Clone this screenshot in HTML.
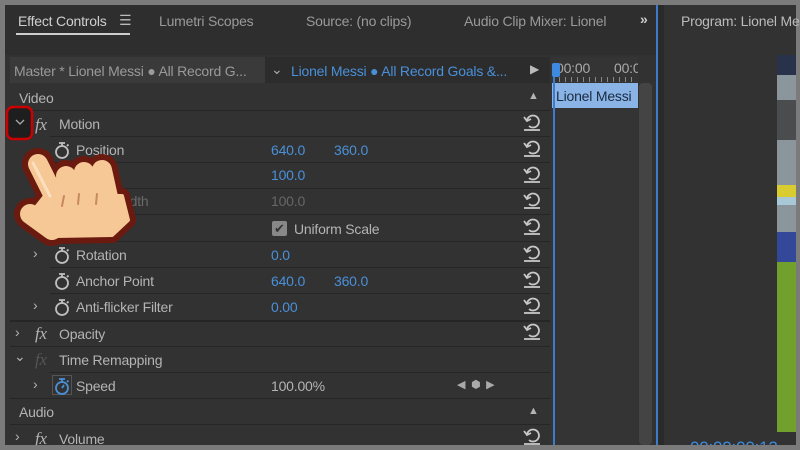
<!DOCTYPE html>
<html><head><meta charset="utf-8"><style>
*{margin:0;padding:0;box-sizing:border-box}
html,body{width:800px;height:450px;overflow:hidden}
body{background:#7b7b7b;position:relative;font-family:"Liberation Sans","DejaVu Sans",sans-serif;font-size:14px;color:#b4b4b4}
.a{position:absolute}
.row{position:absolute;left:10px;width:540px;height:26px;border-top:1px solid #262626}
.t{position:absolute;white-space:nowrap;font-size:14px;letter-spacing:-0.2px}
.blue{color:#4a90d9}
</style></head><body>
<div class="a" style="left:5px;top:5px;width:791px;height:440px;background:#323232"></div>
<div class="a" style="left:5px;top:5px;width:651px;height:50px;background:#2e2e2e"></div>
<div class="t" style="left:18px;top:13px;color:#cfcfcf">Effect Controls</div>
<div class="t" style="left:119px;top:12px;color:#bbb">☰</div>
<div class="a" style="left:16px;top:33px;width:114px;height:2px;background:#ccc"></div>
<div class="t" style="left:159px;top:13px;color:#9a9a9a">Lumetri Scopes</div>
<div class="t" style="left:306px;top:13px;color:#9a9a9a">Source: (no clips)</div>
<div class="t" style="left:464px;top:13px;color:#9a9a9a;width:146px;overflow:hidden">Audio Clip Mixer: Lionel</div>
<div class="t" style="left:640px;top:11px;color:#ccc;font-weight:bold">»</div>
<div class="a" style="left:656px;top:5px;width:2px;height:440px;background:#3d7ccc"></div>
<div class="a" style="left:658px;top:5px;width:6px;height:440px;background:#2a2a2a"></div>
<div class="t" style="left:681px;top:13px;color:#bbb">Program: Lionel Messi</div>
<div class="a" style="left:10px;top:57px;width:255px;height:26px;background:#3a3a3a"></div>
<div class="t" style="left:14px;top:63px;color:#9a9a9a">Master * Lionel Messi ● All Record G...</div>
<div class="a" style="left:265px;top:57px;width:285px;height:26px;background:#2c2c2c"></div>
<div class="t" style="left:271px;top:61px;color:#aaa">⌄</div>
<div class="t blue" style="left:291px;top:63px">Lionel Messi ● All Record Goals &amp;...</div>
<div class="t" style="left:530px;top:62px;color:#bbb;font-size:12px">▶</div>
<div class="a" style="left:550px;top:57px;width:88px;height:388px;background:#343434"></div>
<div class="t" style="left:556px;top:60px;color:#aaa">00:00</div>
<div class="t" style="left:614px;top:60px;color:#aaa;width:24px;overflow:hidden">00:00</div>
<div class="a" style="left:552px;top:63px;width:8px;height:14px;background:#3d8ae0;border-radius:2px"></div>
<div class="a" style="left:553px;top:77px;width:83px;height:5px;background:repeating-linear-gradient(90deg,#888 0 1px,transparent 1px 6px)"></div>
<div class="a" style="left:552px;top:83px;width:86px;height:25px;background:#8ab4e6"></div>
<div class="t" style="left:556px;top:88px;color:#1a2a40">Lionel Messi</div>
<div class="a" style="left:553px;top:77px;width:2px;height:368px;background:#3d7ccc"></div>
<div class="a" style="left:639px;top:83px;width:13px;height:362px;background:#444;border-radius:4px"></div>
<div class="row" style="top:84px;border-top:none"></div>
<div class="t" style="left:19px;top:90px">Video</div>
<div class="t" style="left:528px;top:90px;font-size:11px">▲</div>
<div class="row" style="top:110px"></div>
<div class="t" style="left:35px;top:115px;font-style:italic;font-family:'Liberation Serif',serif;font-size:17px">fx</div>
<div class="t" style="left:59px;top:116px">Motion</div>
<div class="row" style="left:50px;width:500px;top:136px"></div>
<div class="t" style="left:76px;top:142px">Position</div>
<div class="t blue" style="left:271px;top:142px">640.0</div><div class="t blue" style="left:334px;top:142px">360.0</div>
<div class="row" style="left:50px;width:500px;top:162px"></div>
<div class="t blue" style="left:271px;top:167px">100.0</div>
<div class="row" style="left:50px;width:500px;top:188px"></div>
<div class="t" style="left:76px;top:193px;color:#6a6a6a">Scale Width</div>
<div class="t" style="left:271px;top:193px;color:#666">100.0</div>
<div class="row" style="left:50px;width:500px;top:214px"></div>
<div class="a" style="left:272px;top:221px;width:15px;height:15px;background:#888;border-radius:2px;color:#333;font-size:13px;line-height:15px;text-align:center">✔</div>
<div class="t" style="left:294px;top:221px">Uniform Scale</div>
<div class="row" style="left:50px;width:500px;top:241px"></div>
<div class="t" style="left:33px;top:245px">›</div>
<div class="t" style="left:76px;top:247px">Rotation</div>
<div class="t blue" style="left:271px;top:247px">0.0</div>
<div class="row" style="left:50px;width:500px;top:267px"></div>
<div class="t" style="left:76px;top:273px">Anchor Point</div>
<div class="t blue" style="left:271px;top:273px">640.0</div><div class="t blue" style="left:334px;top:273px">360.0</div>
<div class="row" style="left:50px;width:500px;top:293px"></div>
<div class="t" style="left:33px;top:297px">›</div>
<div class="t" style="left:76px;top:299px">Anti-flicker Filter</div>
<div class="t blue" style="left:271px;top:299px">0.00</div>
<div class="row" style="top:320px;border-top:2px solid #262626"></div>
<div class="t" style="left:15px;top:324px">›</div>
<div class="t" style="left:35px;top:324px;font-style:italic;font-family:'Liberation Serif',serif;font-size:17px">fx</div>
<div class="t" style="left:59px;top:326px">Opacity</div>
<div class="row" style="top:346px"></div>
<div class="t" style="left:14px;top:348px">⌄</div>
<div class="t" style="left:35px;top:350px;font-style:italic;font-family:'Liberation Serif',serif;font-size:17px;color:#555">fx</div>
<div class="t" style="left:59px;top:352px">Time Remapping</div>
<div class="row" style="left:50px;width:500px;top:372px"></div>
<div class="t" style="left:33px;top:376px">›</div>
<div class="a" style="left:52px;top:375px;width:20px;height:20px;border:1px solid #555"></div>
<div class="t" style="left:76px;top:378px">Speed</div>
<div class="t" style="left:271px;top:378px">100.00%</div>
<div class="t" style="left:457px;top:378px;font-size:11px;color:#aaa">◀&nbsp;&nbsp;⬢&nbsp;&nbsp;▶</div>
<div class="row" style="top:398px"></div>
<div class="t" style="left:19px;top:404px">Audio</div>
<div class="t" style="left:528px;top:405px;font-size:11px">▲</div>
<div class="row" style="top:424px"></div>
<div class="t" style="left:15px;top:428px">›</div>
<div class="t" style="left:35px;top:429px;font-style:italic;font-family:'Liberation Serif',serif;font-size:17px">fx</div>
<div class="t" style="left:59px;top:431px">Volume</div>
<svg class="a" style="left:0;top:0" width="800" height="450">
<g fill="none" stroke="#c8c8c8" stroke-width="1.8">
<g id="r"><path d="M527 121 a6 6 0 1 1 2 5"/><path d="M524 117 l3 4 l4 -2"/><path d="M524 130 h16"/></g>
<use href="#r" y="26"/><use href="#r" y="52"/><use href="#r" y="78"/><use href="#r" y="104"/><use href="#r" y="131"/><use href="#r" y="157"/><use href="#r" y="183"/><use href="#r" y="209"/><use href="#r" y="314"/>
</g>
<g fill="none" stroke="#c0c0c0" stroke-width="1.8">
<g id="sw"><circle cx="62" cy="152" r="6"/><path d="M59 143 h6 M62 143 v3 M67 146 l1.5 -1.5"/></g>
<use href="#sw" y="105"/><use href="#sw" y="131"/><use href="#sw" y="157"/>
<g stroke="#4a90d9"><circle cx="62" cy="388" r="6"/><path d="M59 379 h6 M62 379 v3 M67 382 l1.5 -1.5 M62 388 l2 -3"/></g>
</g>
<rect x="7" y="107" width="25" height="32" rx="6" fill="#1e1e1e" stroke="#c00" stroke-width="2.5"/>
<path d="M16 120 l4 4 l4 -4" fill="none" stroke="#aaa" stroke-width="1.3"/>
<g stroke="#6b1a10" stroke-linecap="round" stroke-linejoin="round" fill="#6b1a10">
<path d="M38 164 L60 208 M66 176 L72 206 M84 172 L90 206 M102 170 L110 206 M30 214 L52 230" stroke-width="32"/>
<path d="M45 196 L122 196 L128 220 L112 235 L55 236 L30 215 Z" stroke-width="16"/>
</g>
<g stroke="#f6c896" stroke-linecap="round" stroke-linejoin="round" fill="#f6c896">
<path d="M38 164 L60 208 M66 176 L72 206 M84 172 L90 206 M102 170 L110 206 M30 214 L52 230" stroke-width="20"/>
<path d="M45 196 L122 196 L128 220 L112 235 L55 236 L30 215 Z" stroke-width="4"/>
</g>
<path d="M33 163 L50 196" stroke="#fbe0c0" stroke-width="3" stroke-linecap="round"/>
<path d="M62 206 L64 196 M78 204 L79 194 M96 204 L97 194" stroke="#c88860" stroke-width="2" stroke-linecap="round"/>
<rect x="777" y="55" width="19" height="377" fill="#8a969c"/>
<rect x="777" y="55" width="19" height="20" fill="#28324a"/>
<rect x="777" y="100" width="19" height="40" fill="#4a4c4e"/>
<rect x="777" y="185" width="19" height="12" fill="#d8cc30"/>
<rect x="777" y="197" width="19" height="8" fill="#a8c8d8"/>
<rect x="777" y="232" width="19" height="30" fill="#34489a"/>
<rect x="777" y="262" width="19" height="170" fill="#72a02c"/>
</svg>
<div class="t" style="left:690px;top:438px;color:#3d8ae0;font-size:17px">00:00:00:12</div>
<div class="a" style="left:0;top:445px;width:800px;height:5px;background:#7b7b7b"></div>
</body></html>
